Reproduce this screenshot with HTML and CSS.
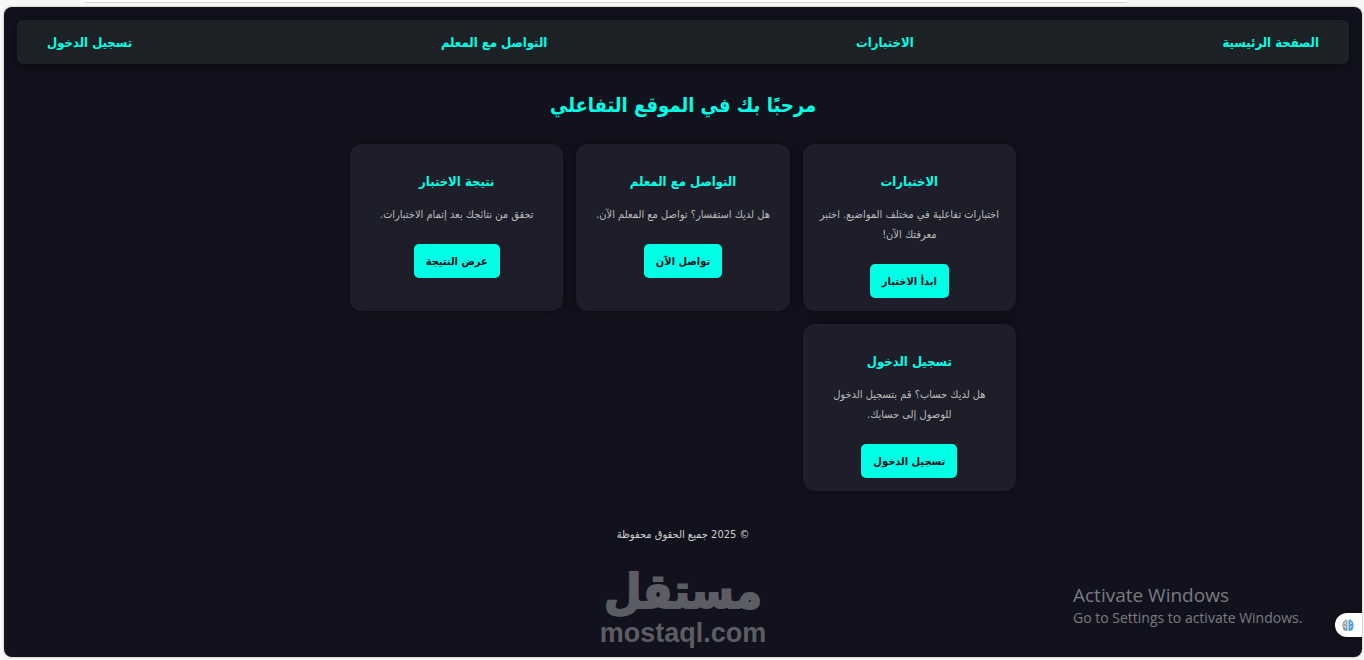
FILE: index.html
```html
<!DOCTYPE html>
<html lang="ar" dir="rtl">
<head>
    <meta charset="UTF-8">
    <meta name="viewport" content="width=device-width, initial-scale=1.0">
    <title>الموقع التفاعلي</title>
    <link rel="stylesheet" href="styles.css">
</head>
<body>
    <div class="toolbar"><div class="address-bar"></div></div>

    <div class="page">
        <nav class="navbar">
            <a href="#">الصفحة الرئيسية</a>
            <a href="#exams">الاختبارات</a>
            <a href="#contact">التواصل مع المعلم</a>
            <a href="#login">تسجيل الدخول</a>
        </nav>

        <main>
            <h1>مرحبًا بك في الموقع التفاعلي</h1>

            <div class="cards">
                <section class="card" id="exams">
                    <h2>الاختبارات</h2>
                    <p>اختبارات تفاعلية في مختلف المواضيع. اختبر معرفتك الآن!</p>
                    <button type="button">ابدأ الاختبار</button>
                </section>
                <section class="card" id="contact">
                    <h2>التواصل مع المعلم</h2>
                    <p>هل لديك استفسار؟ تواصل مع المعلم الآن.</p>
                    <button type="button">تواصل الآن</button>
                </section>
                <section class="card" id="result">
                    <h2>نتيجة الاختبار</h2>
                    <p>تحقق من نتائجك بعد إتمام الاختبارات.</p>
                    <button type="button">عرض النتيجة</button>
                </section>
                <section class="card" id="login">
                    <h2>تسجيل الدخول</h2>
                    <p>هل لديك حساب؟ قم بتسجيل الدخول للوصول إلى حسابك.</p>
                    <button type="button">تسجيل الدخول</button>
                </section>
            </div>
        </main>

        <footer>© 2025 جميع الحقوق محفوظة</footer>

        <div class="watermark">
            <span class="watermark-name">مستقل</span>
            <span class="watermark-url" dir="ltr">mostaql.com</span>
        </div>

        <div class="activate" dir="ltr" lang="en">
            <div class="activate-title">Activate Windows</div>
            <div class="activate-text">Go to Settings to activate Windows.</div>
        </div>

        <button type="button" class="side-button" aria-label="Assistant">
            <svg width="12" height="13" viewBox="0 0 12 13">
                <path d="M5.5 1.5C4.500 0 2.500.5 2.500 2 1 2 .3 4 1 5 0 6-.1 8 1 9c-.1 2 1.500 3 2.500 2.500 1 1 2 .5 2-.5z" fill="#a3a5ad"/>
                <path d="M6.500 1.500C7.500 0 9.500.5 9.500 2 11 2 11.700 4 11 5c1 1 1.100 3 0 4 .1 2-1.500 3-2.500 2.500-1 1-2 .5-2-.5z" fill="#4b9fd6"/>
                <path d="M2 4.500h1.500M3.500 2.500v2l1 1M1.500 7.500h2v2M8.500 2.500v2l-1 1M10 4.500H8.500M10.500 7.500h-2v2" fill="none" stroke="#e6edf4" stroke-width=".7"/>
                <path d="M2 11l1.500-1.500L5 10.500v1" fill="none" stroke="#4b9fd6"/>
            </svg>
        </button>
    </div>
</body>
</html>
```
FILE: styles.css
```css
* { box-sizing: border-box; }

body {
    margin: 0;
    background: #f7f7f7;
    font-family: "DejaVu Sans Condensed", "DejaVu Sans", sans-serif;
    color: #d0d0d0;
}

/* browser strip above the page */
.toolbar { height: 7px; padding: 0 236px 0 84px; }
.address-bar { height: 3px; background: #fff; border-bottom: 1px solid #d2d2d2; border-radius: 0 0 12px 12px; }

.page {
    position: relative;
    min-height: calc(100vh - 10px);
    margin: 0 2px 3px 4px;
    padding: 13px;
    background: #12121e;
    border-radius: 8px;
    overflow: hidden;
    box-shadow: 0 0 2px rgba(0, 0, 0, 0.4);
}

.navbar {
    display: flex;
    justify-content: space-between;
    align-items: center;
    height: 44px;
    padding: 0 30px;
    background: #1c2126;
    border-radius: 6px;
    box-shadow: 0 3px 12px rgba(0, 0, 0, 0.5);
}
.navbar a { color: #00ffe5; font-size: 13px; font-weight: bold; text-decoration: none; }

main { max-width: 666px; margin: 0 auto; }

h1 {
    margin: 21px 0 19px;
    font-size: 20px;
    line-height: 40px;
    text-align: center;
    color: #00ffe5;
}

.cards { display: grid; grid-template-columns: repeat(3, 1fr); gap: 13px; }

.card {
    min-height: 167px;
    padding: 13px;
    background: #1e1e2a;
    border-radius: 12px;
    box-shadow: 0 0 12px rgba(0, 0, 0, 0.4);
    text-align: center;
}
.card h2 { margin: 13px 0 11px; font-size: 13px; line-height: 24px; color: #00ffe5; }
.card p { margin: 0 0 19px; font-size: 11px; line-height: 20px; color: #bbb; }
.card button {
    height: 34px;
    padding: 0 12px;
    border: none;
    border-radius: 5px;
    background: #00ffe5;
    color: #12121e;
    font-family: inherit;
    font-size: 11px;
    font-weight: bold;
    cursor: pointer;
}

footer { margin-top: 34px; font-size: 11px; line-height: 20px; text-align: center; }

.watermark {
    position: absolute;
    bottom: 10px;
    left: 0;
    right: 0;
    display: flex;
    flex-direction: column;
    align-items: center;
    gap: 4px;
    color: #5c5c65;
    font-weight: bold;
    pointer-events: none;
}
.watermark-name { font-size: 48px; line-height: 48px; -webkit-text-stroke: 2px #5c5c65; }
.watermark-url { font-family: "Liberation Sans", Arial, sans-serif; font-size: 27px; line-height: 28px; }

.activate {
    position: absolute;
    right: 53px;
    bottom: 29px;
    width: 236px;
    color: #7b7b80;
    font-family: "Open Sans", "Noto Sans", sans-serif;
    pointer-events: none;
}
.activate-title { font-size: 19px; line-height: 26px; }
.activate-text { font-size: 14px; line-height: 20px; }

.side-button {
    position: absolute;
    right: 0;
    bottom: 20px;
    display: flex;
    align-items: center;
    width: 27px;
    height: 24px;
    padding: 0 0 0 7px;
    direction: ltr;
    border: none;
    border-radius: 12px 0 0 12px;
    background: #fff;
    box-shadow: 0 0 12px rgba(0, 0, 0, 0.4);
}
```
